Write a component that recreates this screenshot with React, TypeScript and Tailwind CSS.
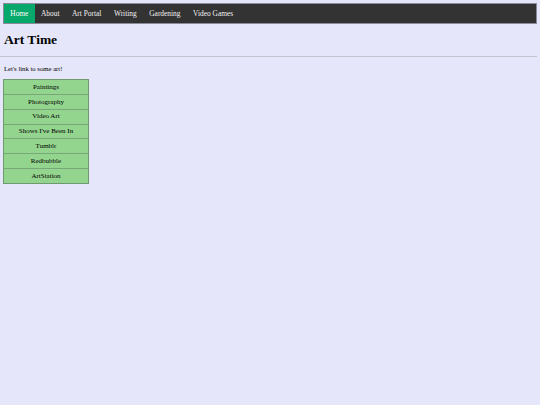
const NAV = ['Home', 'About', 'Art Portal', 'Writing', 'Gardening', 'Video Games']
const LINKS = ['Paintings', 'Photography', 'Video Art', "Shows I've Been In", 'Tumblr', 'Redbubble', 'ArtStation']

export default function App() {
  return (
    <div className="min-h-[405px] bg-[#e6e6fa] pt-[3px] font-['Liberation_Serif',serif] text-black">
      {/* top nav */}
      <nav className="mx-[3px] flex h-[21px] border border-[#8a8a9a] bg-[#333333]">
        {NAV.map((n, i) => (
          <a
            key={n}
            className={
              i === 0
                ? 'flex items-center bg-[#07a86c] px-[6.3px] text-[7.4px] text-white'
                : 'flex items-center px-[6.3px] text-[7.4px] text-[#f2f2f2]'
            }
          >
            {n}
          </a>
        ))}
      </nav>

      <h1 className="ml-[4px] mt-[7px] text-[13.5px] font-bold leading-[17px]">Art Time</h1>
      <hr className="mr-[3px] mt-[8px] border-t border-[#c4c4d0]" />
      <p className="ml-[4px] mt-[8px] text-[6.7px] leading-[8px]">Let's link to some art!</p>

      <div className="ml-[3px] mt-[6px] flex w-[86px] flex-col border border-[#6f9a6f] bg-[#93d58e]">
        {LINKS.map((l, i) => (
          <div
            key={l}
            className={
              i === 0
                ? 'flex h-[14px] items-center justify-center text-[7px]'
                : 'flex h-[14.8px] items-center justify-center border-t border-[#78a878] text-[7px]'
            }
          >
            {l}
          </div>
        ))}
      </div>
    </div>
  )
}
